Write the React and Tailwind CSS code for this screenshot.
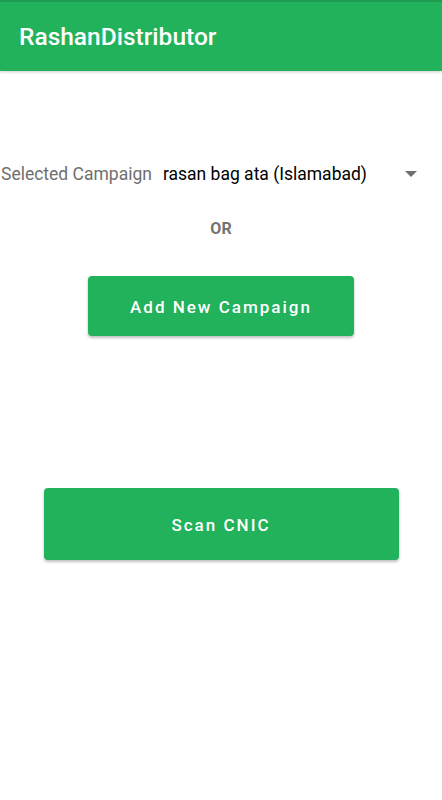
import React from 'react';

export default function App() {
    return (
        <div className="w-[442px] h-[800px] bg-white flex flex-col" style={{ fontFamily: 'Roboto, "Noto Sans", sans-serif' }}>
            <header className="h-[71px] bg-[#21b25b] border-t-2 border-[#1c9a4f] flex items-center px-[19px] shadow-[0_1px_3px_rgba(0,0,0,0.2)]">
                <h1 className="text-white text-[24.5px] font-medium leading-none mt-[1px]">RashanDistributor</h1>
            </header>

            <main className="flex flex-col items-center">
                <div className="w-full mt-[92px] flex items-center h-[22px]">
                    <span className="ml-[1px] text-[17.5px] text-[#6f6f6f]">Selected Campaign</span>
                    <span className="ml-[11px] text-[17.5px] text-black">rasan bag ata (Islamabad)</span>
                    <svg className="ml-auto mr-[25px]" width="12" height="6" viewBox="0 0 12 6"><path d="M0 0h12L6 6z" fill="#6f6f6f" /></svg>
                </div>

                <div className="mt-[32px] text-[16px] font-bold text-[#737373]">OR</div>

                <button className="mt-[35px] w-[266px] h-[60px] pt-[3px] bg-[#21b25b] rounded-[4px] text-white text-[17px] font-medium tracking-[2px] shadow-[0_2px_3px_rgba(0,0,0,0.25)]">
                    Add New Campaign
                </button>

                <button className="mt-[152px] w-[355px] h-[72px] pt-[3px] bg-[#21b25b] rounded-[4px] text-white text-[17px] font-medium tracking-[2px] shadow-[0_2px_3px_rgba(0,0,0,0.25)]">
                    Scan CNIC
                </button>
            </main>
        </div>
    );
}
